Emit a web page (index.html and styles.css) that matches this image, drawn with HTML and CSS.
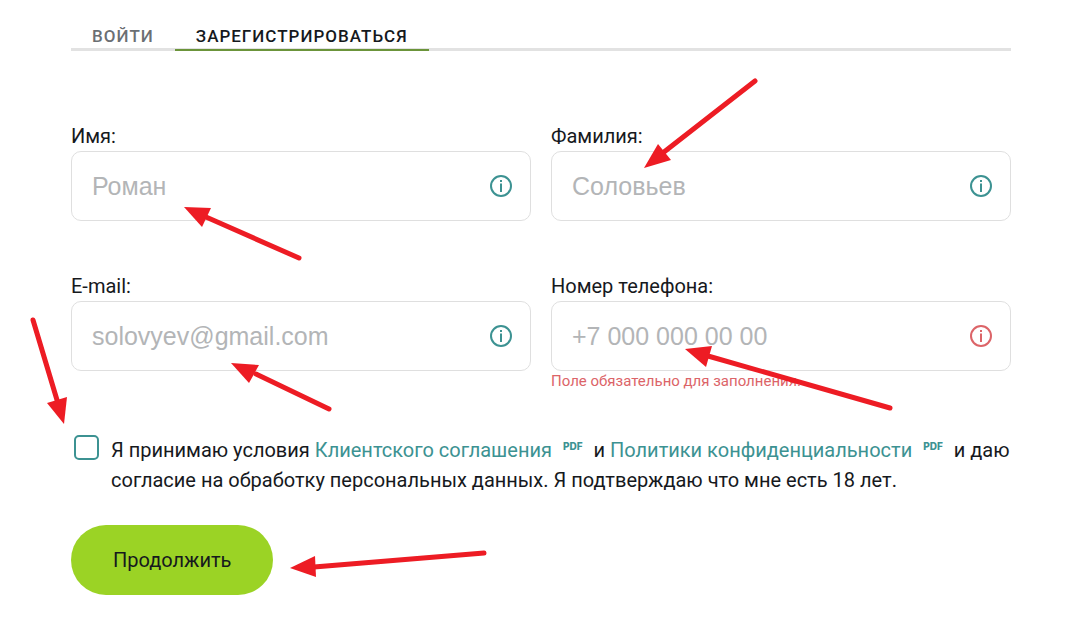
FILE: index.html
```
<!DOCTYPE html>
<html lang="ru">
<head>
    <meta charset="UTF-8">
    <meta name="viewport" content="width=device-width, initial-scale=1.0">
    <title>Регистрация</title>
    <link rel="stylesheet" href="styles.css">
</head>
<body>
    <svg class="icon-defs" aria-hidden="true">
        <symbol id="info" viewBox="0 0 22 22">
            <circle cx="11" cy="11" r="10" fill="none" stroke="currentColor" stroke-width="2"/>
            <rect x="10" y="5" width="2" height="2" fill="currentColor"/>
            <rect x="10" y="8.5" width="2" height="8.5" fill="currentColor"/>
        </symbol>
    </svg>
    <main>
        <nav class="tabs">
            <a href="#login">Войти</a>
            <a href="#register" class="active">Зарегистрироваться</a>
        </nav>
        <form class="register-form">
            <div class="fields">
                <div class="field">
                    <label for="first-name">Имя:</label>
                    <div class="input-box">
                        <input type="text" id="first-name" placeholder="Роман">
                        <svg class="info-icon"><use href="#info"/></svg>
                    </div>
                </div>
                <div class="field">
                    <label for="last-name">Фамилия:</label>
                    <div class="input-box">
                        <input type="text" id="last-name" placeholder="Соловьев">
                        <svg class="info-icon"><use href="#info"/></svg>
                    </div>
                </div>
                <div class="field">
                    <label for="email">E-mail:</label>
                    <div class="input-box">
                        <input type="email" id="email" placeholder="solovyev@gmail.com">
                        <svg class="info-icon"><use href="#info"/></svg>
                    </div>
                </div>
                <div class="field invalid">
                    <label for="phone">Номер телефона:</label>
                    <div class="input-box">
                        <input type="tel" id="phone" placeholder="+7 000 000 00 00">
                        <svg class="info-icon"><use href="#info"/></svg>
                    </div>
                    <div class="error">Поле обязательно для заполнения.</div>
                </div>
            </div>
            <div class="agreement">
                <input type="checkbox" id="agree">
                <label for="agree">Я принимаю условия <a href="#agreement">Клиентского соглашения<span class="pdf">PDF</span></a> и <a href="#privacy">Политики конфиденциальности<span class="pdf">PDF</span></a> и даю согласие на обработку персональных данных. Я подтверждаю что мне есть 18 лет.</label>
            </div>
            <button type="submit" class="submit-btn">Продолжить</button>
        </form>
    </main>

    <!-- Hint arrows drawn over the form -->
    <svg class="arrows" width="1086" height="620" viewBox="0 0 1086 620" aria-hidden="true">
        <path d="M299 258L206 217M755 81L664 152M33 320L57 400M329 409L256 374M890 408L708 356M484 553L314 567"/>
        <polygon points="184,207 211,208 202,227"/>
        <polygon points="644,168 658,144 671,160"/>
        <polygon points="64,424 47,403 67,397"/>
        <polygon points="231,363 259,365 249,383"/>
        <polygon points="685,349 712,346 706,367"/>
        <polygon points="290,568 315,556 316,577"/>
    </svg>
</body>
</html>
```
FILE: styles.css
```
* { box-sizing: border-box; }
body { font-family: Roboto, Arial, sans-serif; font-size: 20px; line-height: 30px; margin: 0; background: #fff; color: #16191d; position: relative; }
main { padding: 20px 75px 24px 71px; }
.icon-defs { display: none; }

.tabs { display: flex; height: 31px; line-height: 32px; box-shadow: inset 0 -3px #e2e2e2; }
.tabs a { padding: 0 21px; font-size: 17px; font-weight: 500; letter-spacing: 1px; text-transform: uppercase; text-decoration: none; color: #6b6f73; }
.tabs a.active { color: #16191d; border-bottom: 2px solid #6b943a; }

.fields { display: grid; grid-template-columns: 1fr 1fr; column-gap: 20px; row-gap: 50px; margin-top: 70px; }
.field label { display: block; }
.input-box { display: flex; align-items: center; height: 70px; padding: 0 18px 0 20px; border: 1px solid #dfdfdf; border-radius: 10px; }
.input-box input { flex: 1; min-width: 0; padding: 0; border: none; outline: none; background: none; font-family: "Liberation Sans", Arial, sans-serif; font-size: 25px; }
.input-box input::placeholder { color: #b3b5b7; opacity: 1; }
.info-icon { width: 22px; height: 22px; color: #3c9292; }
.invalid .info-icon { color: #dc6468; }
.error { font-size: 15px; line-height: 20px; color: #dc6468; }

.agreement { display: flex; gap: 12px; margin-top: 44px; padding-left: 3px; }
.agreement input { appearance: none; flex: none; width: 25px; height: 25px; margin: 0; border: 2px solid #3c9292; border-radius: 5px; }
.agreement a { color: #3c9292; text-decoration: none; }
.pdf { margin: 0 6px 0 11px; font-family: Inter, sans-serif; font-size: 10px; line-height: 10px; font-weight: 800; vertical-align: 7px; }

.submit-btn { display: block; height: 70px; margin-top: 30px; padding: 0 42px; border: none; border-radius: 35px; background: #9bd325; color: #16191d; font-family: inherit; font-size: 20px; cursor: pointer; }

.arrows { position: absolute; top: 0; left: 0; pointer-events: none; fill: #ed1c24; }
.arrows path { fill: none; stroke: #ed1c24; stroke-width: 5; stroke-linecap: round; }
```
